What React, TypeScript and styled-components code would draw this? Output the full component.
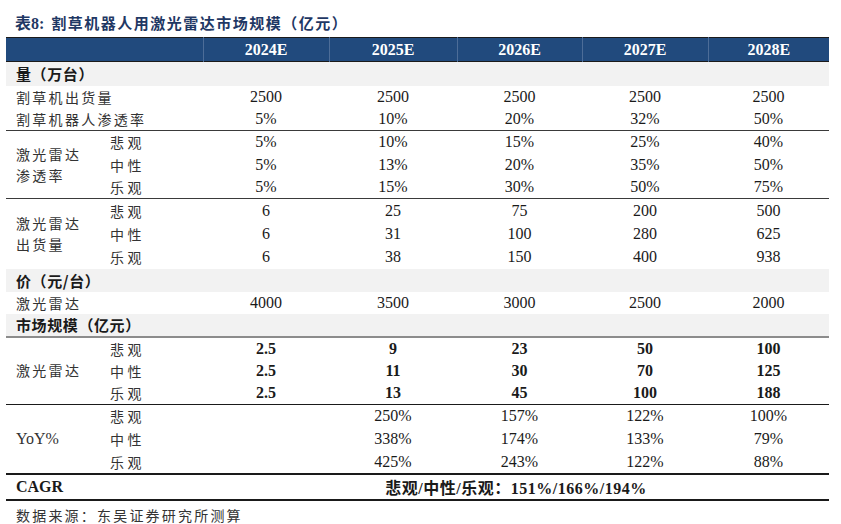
import React from "react";
import styled, { createGlobalStyle } from "styled-components";

const GlobalStyle = createGlobalStyle`
  html, body {
    margin: 0;
    padding: 0;
    background: #ffffff;
  }
  body {
    font-family: "Liberation Serif", "Noto Sans CJK SC", serif;
    color: #1a1a1a;
  }
`;

const years = ["2024E", "2025E", "2026E", "2027E", "2028E"];

type Group = {
  label: string[];
  rows: { sub: string; values: string[] }[];
  bold?: boolean;
  heights: number[];
  line: string;
};

const Page = () => {
  const penetration: Group = {
    label: ["激光雷达", "渗透率"],
    heights: [23, 23, 22],
    line: "1px solid #3a3a3a",
    rows: [
      { sub: "悲观", values: ["5%", "10%", "15%", "25%", "40%"] },
      { sub: "中性", values: ["5%", "13%", "20%", "35%", "50%"] },
      { sub: "乐观", values: ["5%", "15%", "30%", "50%", "75%"] },
    ],
  };
  const shipment: Group = {
    label: ["激光雷达", "出货量"],
    heights: [24, 23, 23],
    line: "none",
    rows: [
      { sub: "悲观", values: ["6", "25", "75", "200", "500"] },
      { sub: "中性", values: ["6", "31", "100", "280", "625"] },
      { sub: "乐观", values: ["6", "38", "150", "400", "938"] },
    ],
  };
  const market: Group = {
    label: ["激光雷达"],
    heights: [23, 22, 23],
    line: "1px solid #1a1a1a",
    bold: true,
    rows: [
      { sub: "悲观", values: ["2.5", "9", "23", "50", "100"] },
      { sub: "中性", values: ["2.5", "11", "30", "70", "125"] },
      { sub: "乐观", values: ["2.5", "13", "45", "100", "188"] },
    ],
  };
  const yoy: Group = {
    label: ["YoY%"],
    heights: [23, 23, 23],
    line: "2px solid #1a1a1a",
    rows: [
      { sub: "悲观", values: ["", "250%", "157%", "122%", "100%"] },
      { sub: "中性", values: ["", "338%", "174%", "133%", "79%"] },
      { sub: "乐观", values: ["", "425%", "243%", "122%", "88%"] },
    ],
  };

  const renderGroup = (g: Group, serifLabel = false) => (
    <Body $line={g.line}>
      {g.rows.map((r, i) => (
        <Row key={r.sub} $h={g.heights[i]}>
          {i === 0 && (
            <GroupCell rowSpan={3} $serif={serifLabel}>
              {g.label.map((l) => (
                <div key={l}>{l}</div>
              ))}
            </GroupCell>
          )}
          <SubCell>{r.sub}</SubCell>
          {r.values.map((v, j) => (
            <Num key={j} $bold={g.bold}>
              {v}
            </Num>
          ))}
        </Row>
      ))}
    </Body>
  );

  return (
    <Wrap>
      <Title>
        <TitleNo>表8:</TitleNo>
        <span>割草机器人用激光雷达市场规模（亿元）</span>
      </Title>
      <Table>
        <colgroup>
          <col style={{ width: 101 }} />
          <col style={{ width: 96 }} />
          <col style={{ width: 126 }} />
          <col style={{ width: 128 }} />
          <col style={{ width: 125 }} />
          <col style={{ width: 126 }} />
          <col style={{ width: 121 }} />
        </colgroup>
        <Head>
          <tr>
            <HeadCell colSpan={2} />
            {years.map((y) => (
              <HeadCell key={y} $sep>
                {y}
              </HeadCell>
            ))}
          </tr>
        </Head>

        <Body $line="1px solid #3a3a3a">
          <SectionRow $h={24}>
            <SectionCell colSpan={7}>量（万台）</SectionCell>
          </SectionRow>
          <Row $h={23}>
            <Label colSpan={2}>割草机出货量</Label>
            {["2500", "2500", "2500", "2500", "2500"].map((v, j) => (
              <Num key={j}>{v}</Num>
            ))}
          </Row>
          <Row $h={22}>
            <Label colSpan={2}>割草机器人渗透率</Label>
            {["5%", "10%", "20%", "32%", "50%"].map((v, j) => (
              <Num key={j}>{v}</Num>
            ))}
          </Row>
        </Body>

        {renderGroup(penetration)}
        {renderGroup(shipment)}

        <Body $line="2px solid #8c8c8c">
          <SectionRow $h={23}>
            <SectionCell colSpan={7}>价（元/台）</SectionCell>
          </SectionRow>
          <Row $h={22}>
            <Label colSpan={2}>激光雷达</Label>
            {["4000", "3500", "3000", "2500", "2000"].map((v, j) => (
              <Num key={j}>{v}</Num>
            ))}
          </Row>
          <SectionRow $h={23}>
            <SectionCell colSpan={7}>市场规模（亿元）</SectionCell>
          </SectionRow>
        </Body>

        {renderGroup(market)}
        {renderGroup(yoy, true)}

        <Body $line="2px solid #1a1a1a">
          <Row $h={24}>
            <CagrLabel colSpan={2}>CAGR</CagrLabel>
            <CagrValue colSpan={5}>悲观/中性/乐观：151%/166%/194%</CagrValue>
          </Row>
        </Body>
      </Table>
      <Source>数据来源：东吴证券研究所测算</Source>
    </Wrap>
  );
};

export default function App() {
  return (
    <>
      <GlobalStyle />
      <Page />
    </>
  );
}

const Wrap = styled.div`
  width: 841px;
  height: 524px;
  padding: 10px 0 0 6px;
  box-sizing: border-box;
`;

const Title = styled.div`
  display: flex;
  align-items: baseline;
  gap: 7px;
  padding-left: 9px;
  height: 27px;
  font-family: "Noto Sans CJK SC", sans-serif;
  font-weight: 700;
  font-size: 15px;
  letter-spacing: 1.5px;
  color: #1f3864;
`;

const TitleNo = styled.span`
  font-family: "Liberation Serif", "Noto Sans CJK SC", serif;
  font-size: 16px;
  letter-spacing: 0;
`;

const Table = styled.table`
  width: 823px;
  table-layout: fixed;
  border-collapse: collapse;
  border-spacing: 0;
  font-family: "Liberation Serif", "Noto Sans CJK SC", serif;
  font-size: 16px;
  color: #1a1a1a;

  td,
  th {
    padding: 0;
  }
`;

const Head = styled.thead`
  background: #214a7d;
  border-top: 1px solid #1b1b1b;
  border-bottom: 1px solid #1b1b1b;

  tr {
    height: 24px;
  }
`;

const HeadCell = styled.th<{ $sep?: boolean }>`
  color: #ffffff;
  font-weight: 700;
  font-size: 16px;
  text-align: center;
  border-left: ${(p) => (p.$sep ? "1px solid #4d6d98" : "none")};
`;

const Body = styled.tbody<{ $line: string }>`
  border-bottom: ${(p) => p.$line};
`;

const Row = styled.tr<{ $h: number }>`
  height: ${(p) => p.$h}px;
`;

const SectionRow = styled(Row)`
  background: #f2f2f2;
`;

const SectionCell = styled.td`
  padding-left: 10px !important;
  font-family: "Noto Sans CJK SC", sans-serif;
  font-weight: 700;
  font-size: 15px;
  letter-spacing: 0.6px;
  color: #1a1a1a;
`;

const Label = styled.td`
  padding-left: 10px !important;
  font-family: "Noto Sans CJK SC", sans-serif;
  font-size: 14px;
  letter-spacing: 2.3px;
  color: #333333;
  white-space: nowrap;
`;

const GroupCell = styled.td<{ $serif?: boolean }>`
  padding-left: 10px !important;
  vertical-align: middle;
  font-family: ${(p) =>
    p.$serif
      ? `"Liberation Serif", "Noto Sans CJK SC", serif`
      : `"Noto Sans CJK SC", sans-serif`};
  font-size: ${(p) => (p.$serif ? "16px" : "14px")};
  letter-spacing: ${(p) => (p.$serif ? "0" : "2.3px")};
  line-height: 21px;
  color: #333333;
`;

const SubCell = styled.td`
  padding-left: 3px !important;
  font-family: "Noto Sans CJK SC", sans-serif;
  font-size: 14px;
  letter-spacing: 3.5px;
  color: #333333;
`;

const Num = styled.td<{ $bold?: boolean }>`
  text-align: center;
  font-weight: ${(p) => (p.$bold ? 700 : 400)};
`;

const CagrLabel = styled.td`
  padding-left: 10px !important;
  font-weight: 700;
`;

const CagrValue = styled.td`
  text-align: center;
  font-weight: 700;
  font-family: "Liberation Serif", "Noto Sans CJK SC", serif;
  letter-spacing: 0.5px;
`;

const Source = styled.div`
  padding: 4px 0 0 10px;
  font-family: "Noto Sans CJK SC", sans-serif;
  font-size: 14px;
  letter-spacing: 2.2px;
  color: #333333;
`;
